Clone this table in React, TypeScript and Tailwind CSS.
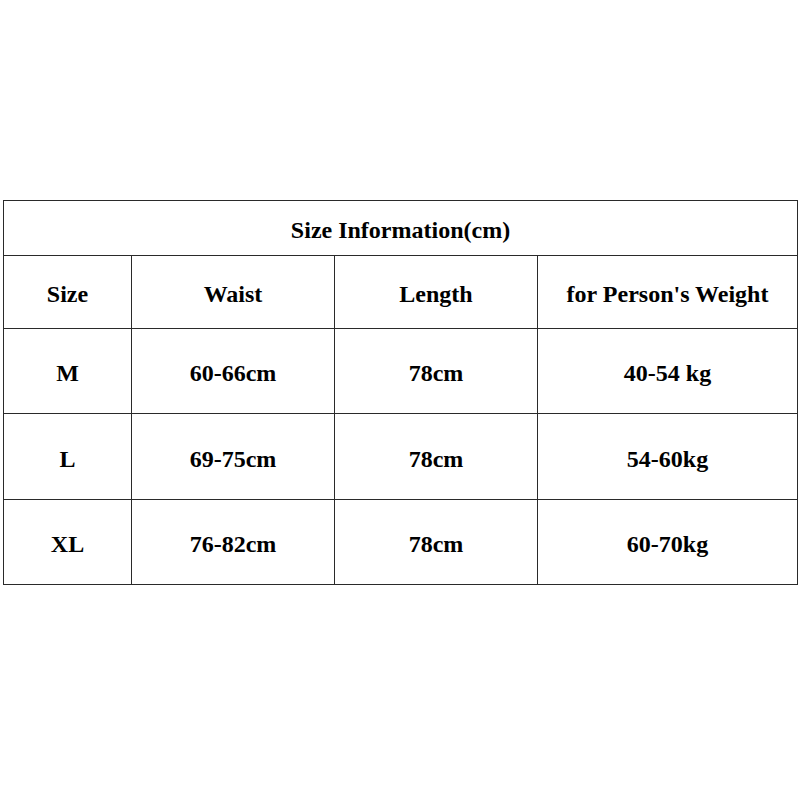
const rows = [
  { size: 'M', waist: '60-66cm', length: '78cm', weight: '40-54 kg', h: 'h-[85px]' },
  { size: 'L', waist: '69-75cm', length: '78cm', weight: '54-60kg', h: 'h-[86px]' },
  { size: 'XL', waist: '76-82cm', length: '78cm', weight: '60-70kg', h: 'h-[85px]' },
];

function Cell({ children, className = '' }: { children: React.ReactNode; className?: string }) {
  return (
    <div className={`flex items-center justify-center border-r border-b border-[#2a2a2a] pt-[4px] ${className}`}>
      {children}
    </div>
  );
}

export default function App() {
  return (
    <div className="h-[800px] w-[800px] bg-white pt-[200px] pl-[3px] font-['Liberation_Serif','Times_New_Roman',serif] text-[24px] font-bold text-black">
      <div className="grid w-[795px] grid-cols-[128px_203px_203px_260px] border-t border-l border-[#2a2a2a]">
        <Cell className="col-span-4 h-[55px]">Size Information(cm)</Cell>

        <Cell className="h-[73px]">Size</Cell>
        <Cell className="h-[73px]">Waist</Cell>
        <Cell className="h-[73px]">Length</Cell>
        <Cell className="h-[73px]">for Person's Weight</Cell>

        {rows.map((r) => (
          <div key={r.size} className="contents">
            <Cell className={r.h}>{r.size}</Cell>
            <Cell className={r.h}>{r.waist}</Cell>
            <Cell className={r.h}>{r.length}</Cell>
            <Cell className={r.h}>{r.weight}</Cell>
          </div>
        ))}
      </div>
    </div>
  );
}
